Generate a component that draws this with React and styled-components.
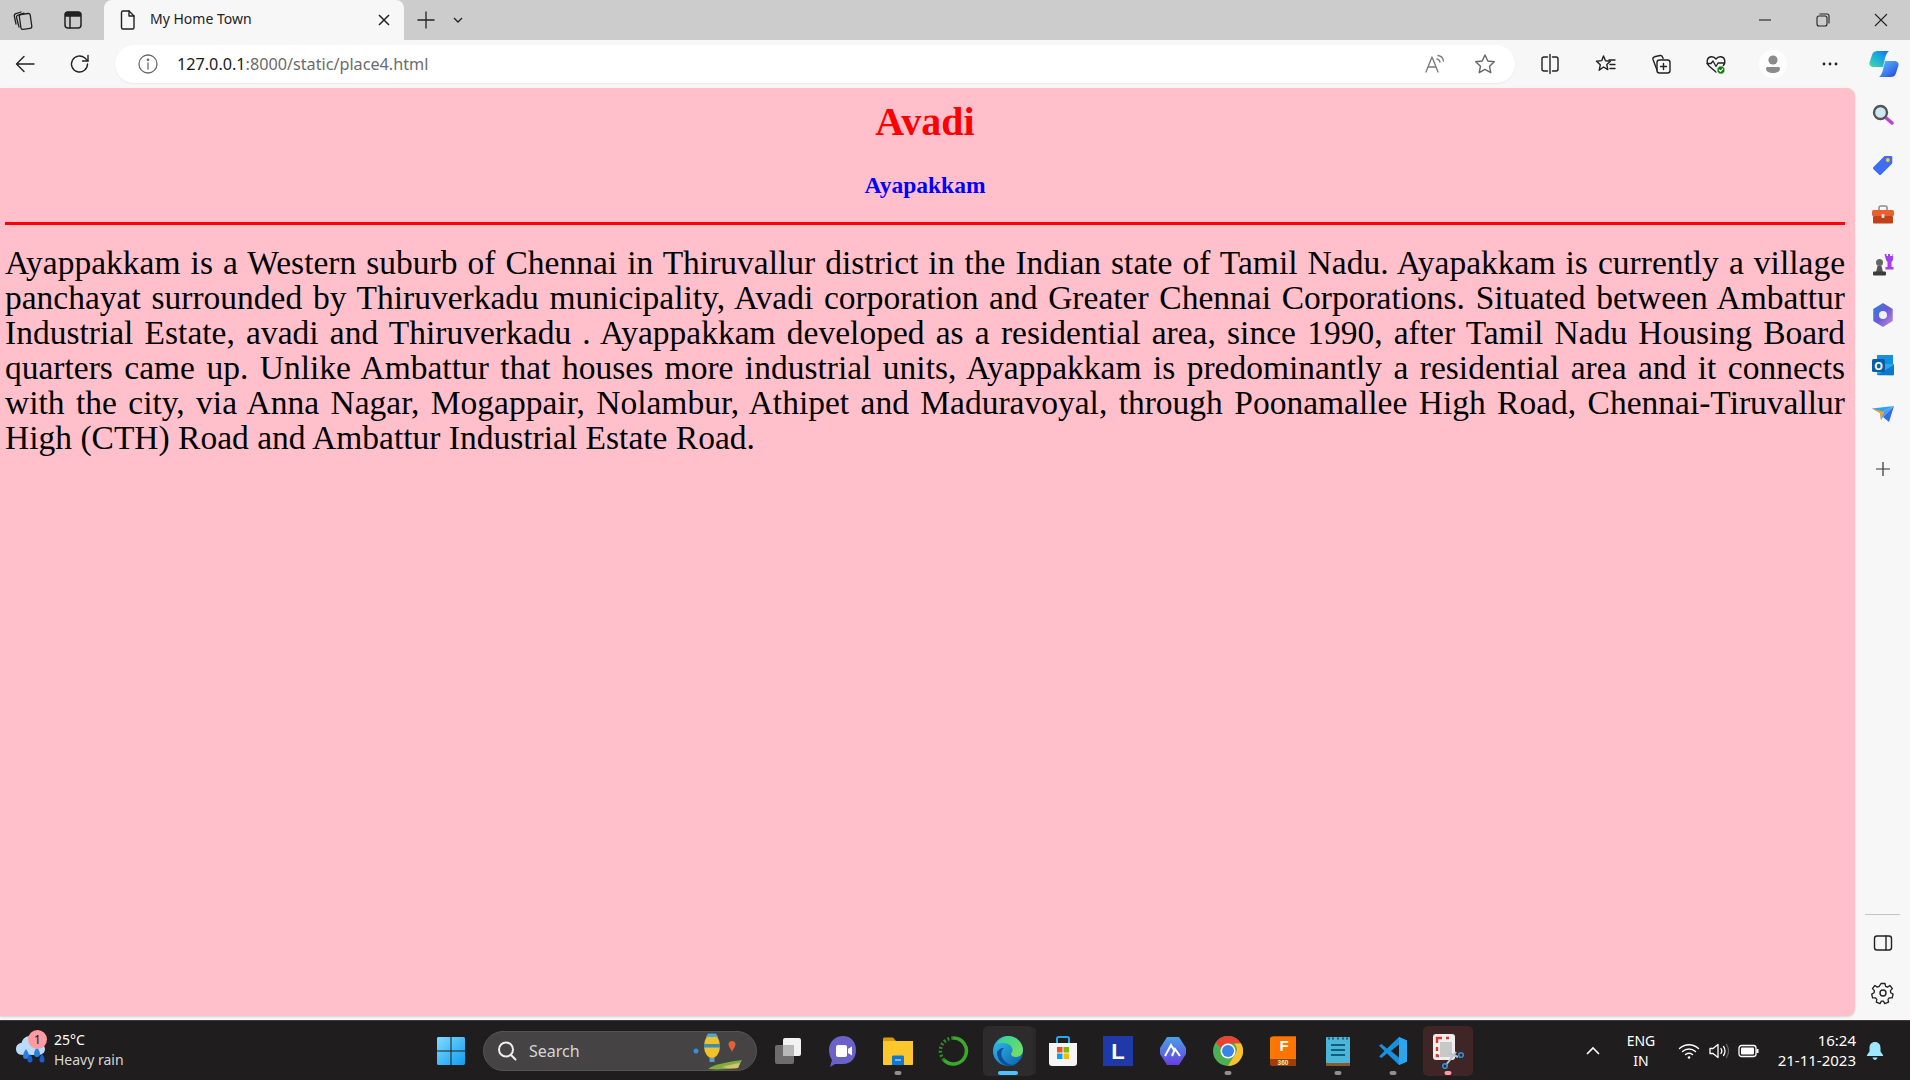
import React from 'react'
import styled, { createGlobalStyle } from 'styled-components'

const GlobalStyle = createGlobalStyle`
  html, body { margin: 0; padding: 0; height: 100%; overflow: hidden; }
  #root { height: 100%; }
`

const Screen = styled.div`
  width: 1910px;
  height: 1080px;
  display: flex;
  flex-direction: column;
  background: #f7f7f7;
  font-family: "Noto Sans", "Open Sans", sans-serif;
`

const TabStrip = styled.div`
  height: 40px;
  background: #cccccc;
  display: flex;
  align-items: stretch;
`

const StripSlot = styled.div`
  width: ${(p) => p.$w || 52}px;
  margin-left: ${(p) => p.$ml || 0}px;
  display: flex;
  align-items: center;
  justify-content: center;
`

const Tab = styled.div`
  width: 300px;
  margin-left: 3px;
  background: #f7f7f7;
  border-radius: 8px 8px 0 0;
  display: flex;
  align-items: center;
  padding: 0 13px 0 12px;
  box-sizing: border-box;
`

const TabTitle = styled.span`
  flex: 1;
  margin-left: 10px;
  font-size: 14px;
  line-height: 18px;
  padding-bottom: 2px;
  color: #222;
`

const WindowControls = styled.div`
  margin-left: auto;
  display: flex;
`

const WinBtn = styled.div`
  width: 58px;
  display: flex;
  align-items: center;
  justify-content: center;
`

const Toolbar = styled.div`
  height: 48px;
  display: flex;
  align-items: center;
  background: #f7f7f7;
`

const ToolSlot = styled.div`
  width: ${(p) => p.$w || 55}px;
  margin-left: ${(p) => p.$ml || 0}px;
  height: 40px;
  flex: none;
  display: flex;
  align-items: center;
  justify-content: center;
`

const AddressBar = styled.div`
  flex: 1;
  height: 38px;
  margin: 0 6px 0 10px;
  background: #ffffff;
  border-radius: 19px;
  box-shadow: 0 1px 2px rgba(0, 0, 0, 0.06);
  display: flex;
  align-items: center;
  padding: 0 5px 0 21px;
`

const Url = styled.span`
  margin-left: 17px;
  font-size: 16.2px;
  color: #1a1a1a;
  flex: 1;
  span { color: #6b6b6b; }
`

const Middle = styled.div`
  height: 932px;
  display: flex;
  align-items: flex-start;
`

const Page = styled.main`
  width: 1855px;
  height: 928px;
  flex: none;
  box-sizing: border-box;
  background: #ffc0cb;
  border-radius: 0 8px 8px 0;
  box-shadow: 0 1px 2px rgba(0, 0, 0, 0.15);
  padding: 11px 10px 0 5px;
  overflow: hidden;
`

const Heading = styled.h1`
  margin: 0;
  text-align: center;
  color: #ff0000;
  font: bold 40px/46px "Liberation Serif", serif;
`

const SubHeading = styled.h3`
  margin: 26px 0 0;
  text-align: center;
  color: #0000ff;
  font: bold 23.5px/28px "Liberation Serif", serif;
`

const Rule = styled.hr`
  margin: 23px 0 0;
  height: 3px;
  border: 0;
  background: #ff0000;
`

const Paragraph = styled.p`
  margin: 20px 0 0;
  color: #000;
  text-align: justify;
  font: 33.5px/35px "Liberation Serif", serif;
`

const SideBar = styled.aside`
  flex: 1;
  height: 930px;
  display: flex;
  flex-direction: column;
  align-items: center;
  padding-top: 2px;
  box-sizing: border-box;
`

const SideIcon = styled.div`
  height: 50px;
  width: 100%;
  flex: none;
  margin-top: ${(p) => p.$mt || 0}px;
  display: flex;
  align-items: center;
  justify-content: center;
`

const SideDivider = styled.div`
  width: 35px;
  height: 1px;
  flex: none;
  margin-top: auto;
  margin-bottom: 3px;
  background: #c4c4c4;
`

const Taskbar = styled.footer`
  height: 60px;
  background: #1f1d1d;
  border-top: 1px solid #3a3a3a;
  box-sizing: border-box;
  display: flex;
  align-items: center;
  color: #fff;
`

const Weather = styled.div`
  width: 423.5px;
  flex: none;
  display: flex;
  align-items: center;
  padding-left: 14px;
  box-sizing: border-box;
`

const WeatherIcon = styled.div`
  position: relative;
  width: 40px;
  height: 40px;
  flex: none;
`

const Badge = styled.span`
  position: absolute;
  left: 14px;
  top: -1px;
  width: 19px;
  height: 19px;
  border-radius: 50%;
  background: #ff9aa2;
  color: #201010;
  font-size: 12px;
  line-height: 19px;
  text-align: center;
`

const WeatherText = styled.div`
  font-size: 14px;
  line-height: 20px;
  padding-bottom: 2px;
  div + div { color: #d8d8d8; }
`

const AppSlot = styled.div`
  position: relative;
  width: ${(p) => (p.$bg ? 50 : 55)}px;
  margin: 0 ${(p) => (p.$bg ? 2.5 : 0)}px;
  height: 50px;
  flex: none;
  display: flex;
  align-items: center;
  justify-content: center;
  border-radius: 5px;
  background: ${(p) => p.$bg || 'transparent'};
  box-shadow: ${(p) => (p.$stacked ? '4px 0 0 -1px #2a2828' : 'none')};
`

const Dot = styled.i`
  position: absolute;
  left: 50%;
  bottom: 1px;
  transform: translateX(-50%);
  width: ${(p) => p.$w || 7}px;
  height: 4px;
  border-radius: 2px;
  background: ${(p) => p.$c || '#8f8f8f'};
`

const SearchBox = styled.div`
  width: 274px;
  height: 40px;
  flex: none;
  margin: 0 3.5px 0 4.5px;
  box-sizing: border-box;
  border-radius: 20px;
  background: #454343;
  border: 1px solid #555;
  display: flex;
  align-items: center;
  padding: 0 4px 0 12px;
  font-size: 16px;
  color: #d6d6d6;
  span { flex: 1; margin-left: 11px; }
`

const Tray = styled.div`
  margin-left: auto;
  display: flex;
  align-items: center;
  padding-right: 16px;
`

const TraySlot = styled.div`
  width: ${(p) => p.$w || 30}px;
  margin-left: ${(p) => p.$ml || 0}px;
  flex: none;
  display: flex;
  align-items: center;
  justify-content: center;
`

const Lang = styled.div`
  width: 50px;
  text-align: center;
  font-size: 14px;
  line-height: 20px;
`

const Clock = styled.div`
  width: 92px;
  text-align: right;
  font-size: 15px;
  line-height: 20px;
  padding-bottom: 2px;
  white-space: nowrap;
`

const S = ({ size = 24, vb = 24, children }) => (
  <svg width={size} height={size} viewBox={`0 0 ${vb} ${vb}`} fill="none" stroke="#222" strokeWidth="1.3" strokeLinecap="round" strokeLinejoin="round">
    {children}
  </svg>
)

const Collections2 = () => (
  <S>
    <rect x="9" y="6" width="11" height="15" rx="2" transform="rotate(-8 14 13)" />
    <path d="M8 19 5.5 9.5c-.3-1.3.4-2 1.5-2.4l6-2" />
    <path d="M5 16 3.4 8.5C3 7 3.8 6 5 5.6L10 4" />
  </S>
)
const TabActions = () => (
  <S>
    <rect x="4" y="4" width="16" height="16" rx="3" strokeWidth="1.5" />
    <path d="M4.500 8h15V5.500l-1.500-1H6l-1.500 1z" fill="#222" />
    <path d="M9 8v12" strokeWidth="1.5" />
  </S>
)
const Doc = () => (
  <S>
    <path d="M7 3h6l5 5v11.500a1.500 1.500 0 0 1-1.500 1.500h-9.500a1.500 1.500 0 0 1-1.500-1.500V4.500A1.500 1.500 0 0 1 7 3z" strokeWidth="1.4" />
    <path d="M13 3v5h5" strokeWidth="1.4" />
  </S>
)
const Info = () => (
  <S>
    <circle cx="12" cy="12" r="9" stroke="#6a6a6a" />
    <path d="M12 11v6" stroke="#6a6a6a" />
    <circle cx="12" cy="7.800" r=".7" fill="#6a6a6a" stroke="#6a6a6a" />
  </S>
)
const ReadAloud = () => (
  <S>
    <path d="M3 20 9 5l6 15M5.300 15h7.400" stroke="#777" />
    <path d="M14 7c1.500.3 2.700 1.500 3 3M15 3.500c3 .4 5 2.500 5.500 5.500" stroke="#777" />
  </S>
)
const Star = () => (
  <S>
    <path d="m12 3 2.800 6 6.500.8-4.800 4.400 1.300 6.500L12 17.400l-5.800 3.300 1.300-6.500L2.700 9.800 9.200 9z" stroke="#666" strokeWidth="1.400" />
  </S>
)
const Split = () => (
  <S>
    <path d="M9.500 5H6a2 2 0 0 0-2 2v10a2 2 0 0 0 2 2h3.500M14.500 5H18a2 2 0 0 1 2 2v10a2 2 0 0 1-2 2h-3.500" strokeWidth="1.400" />
    <path d="M12 2.500v19" strokeWidth="1.400" />
  </S>
)
const Favorites = () => (
  <S>
    <path d="m9.500 4 2 4.800 5 .5-3.700 3.300 1 5-4.300-2.600-4.300 3.300 1.100-5.500-3.800-3.600 5.300-.6z" strokeWidth="1.400" />
    <path d="M15 8h6M16 12.500h5M16 16.500h5" strokeWidth="1.400" />
  </S>
)
const Collections = () => (
  <S>
    <path d="M8 18 4 7.500c-.4-1.400.2-2.300 1.500-2.700L11 3.500c1.200-.2 2 .2 2.500 1.500l.6 1.500" strokeWidth="1.400" />
    <rect x="8" y="8" width="13" height="13" rx="2.500" strokeWidth="1.400" />
    <path d="M14.500 11.500v6M11.500 14.500h6" strokeWidth="1.400" />
  </S>
)
const Health = () => (
  <S>
    <path d="M12 20 5 14C2 11 2.500 5.500 7 4.800c2-.3 3.800.6 5 2.200 1.200-1.600 3-2.500 5-2.200 4.500.7 5 6.200 2 9.200" strokeWidth="1.400" />
    <path d="M3 11.500h4l2-2.500 3 5.500 2-3.500h6" strokeWidth="1.300" />
    <circle cx="17" cy="18" r="4.200" fill="#107c10" stroke="#fff" strokeWidth="1" />
    <path d="m15.200 18 1.300 1.300 2.300-2.500" stroke="#fff" strokeWidth="1.100" />
  </S>
)
const Profile = () => (
  <svg width="28" height="28" viewBox="0 0 28 28">
    <circle cx="14" cy="14" r="14" fill="#fdfdfd" />
    <circle cx="14" cy="10" r="4.600" fill="#8b8b8b" />
    <path d="M7 18.500c0-1 .8-1.500 1.800-1.500h10.400c1 0 1.800.5 1.800 1.500 0 3-3 4.500-7 4.500s-7-1.500-7-4.500z" fill="#8b8b8b" />
  </svg>
)
const Dots = () => (
  <svg width="18" height="4" viewBox="0 0 18 4" fill="#222">
    <circle cx="3" cy="2" r="1.400" /><circle cx="9" cy="2" r="1.400" /><circle cx="15" cy="2" r="1.400" />
  </svg>
)
const Copilot = () => (
  <svg width="30" height="28" viewBox="0 0 30 28">
    <defs>
      <linearGradient id="cp1" x1="0" y1="1" x2="1" y2="0"><stop offset="0" stopColor="#46dca0" /><stop offset=".6" stopColor="#18a4e4" /><stop offset="1" stopColor="#1470d0" /></linearGradient>
      <linearGradient id="cp2" x1="0" y1="0" x2="1" y2="1"><stop offset="0" stopColor="#5cc0f8" /><stop offset=".6" stopColor="#3a78ee" /><stop offset="1" stopColor="#2438c8" /></linearGradient>
    </defs>
    <path d="M8.500 1H20c-2 1.500-3 3.500-3.800 6.500L14 17H5c-3 0-5-1.500-4.500-4.500L3 5C4 2 5.500 1 8.500 1z" fill="url(#cp1)" />
    <path d="M21.500 27H10c2-1.500 3-3.500 3.800-6.500L16 11h9c3 0 5 1.500 4.500 4.500L27 23c-1 3-2.500 4-5.500 4z" fill="url(#cp2)" />
  </svg>
)

const Magnifier = () => (
  <svg width="22" height="22" viewBox="0 0 22 22">
    <path d="m13 13 7 6" stroke="#c23ed8" strokeWidth="3.500" strokeLinecap="round" />
    <circle cx="8.500" cy="8.500" r="6.500" fill="#cfe7f5" stroke="#555" strokeWidth="2.400" />
  </svg>
)
const PriceTag = () => (
  <svg width="22" height="22" viewBox="0 0 22 22">
    <path d="M1.500 13 12 2.500c.5-.5 1-.6 1.600-.6H19c.8 0 1.300.5 1.300 1.300v5.400c0 .6-.2 1.100-.6 1.500L9.200 20.500c-.7.700-1.700.7-2.300 0L1.500 15.200c-.6-.6-.6-1.600 0-2.200z" fill="#3f6df0" />
    <circle cx="15.800" cy="6" r="2" fill="#f7c93a" />
  </svg>
)
const Toolbox = () => (
  <svg width="24" height="22" viewBox="0 0 24 22">
    <path d="M8 6V3.500C8 2.700 8.700 2 9.500 2h5c.8 0 1.500.7 1.500 1.500V6" fill="none" stroke="#8d8d8d" strokeWidth="1.600" />
    <rect x="1" y="6" width="22" height="6" rx="1.500" fill="#e8602c" />
    <rect x="2" y="12" width="20" height="7.500" rx="1" fill="#c2411a" />
    <rect x="10.500" y="10" width="3" height="4" rx=".8" fill="#d8d8d8" />
  </svg>
)
const Chess = () => (
  <svg width="24" height="24" viewBox="0 0 24 24">
    <path d="M15 2h2v2h1.500V2h2v2H23V2h.5v6l-1.500 2v5h2v2.500h-8V15h2v-5l-1.500-2z" fill="#a93bf0" transform="translate(-1.500 -1)" />
    <circle cx="8.500" cy="9.500" r="3.500" fill="#666" />
    <path d="M6.500 13h4l1.500 6H5z" fill="#555" />
    <rect x="2" y="18.500" width="13" height="4" rx="1" fill="#3c3c3c" />
  </svg>
)
const M365 = () => (
  <svg width="22" height="24" viewBox="0 0 22 24">
    <defs>
      <linearGradient id="m1" x1="0" y1="0" x2="1" y2="1"><stop offset="0" stopColor="#2f7fe0" /><stop offset=".5" stopColor="#6a5bd8" /><stop offset="1" stopColor="#c28ad8" /></linearGradient>
    </defs>
    <path d="M11 1 20 6.500v11L11 23 2 17.500v-11z" fill="url(#m1)" stroke="url(#m1)" strokeWidth="1.500" strokeLinejoin="round" />
    <circle cx="11" cy="12" r="4" fill="#f1f1f6" />
  </svg>
)
const Outlook = () => (
  <svg width="24" height="24" viewBox="0 0 24 24">
    <rect x="6" y="2" width="16" height="11" fill="#1490df" />
    <path d="M6 11h17v10.500c0 .5-.4.800-.8.800H7c-.6 0-1-.4-1-.8z" fill="#28a8ea" />
    <path d="m6 22 17-10v9.500c0 .5-.4.800-.8.800z" fill="#0f78c8" />
    <rect x="1" y="6" width="13" height="13" rx="1.500" fill="#0a5ca8" />
    <text x="7.500" y="16.500" textAnchor="middle" fontFamily="Noto Sans, sans-serif" fontWeight="700" fontSize="11" fill="#fff">O</text>
  </svg>
)
const Send = () => (
  <svg width="24" height="20" viewBox="0 0 24 20">
    <path d="M1 3.500 23 1 9 8z" fill="#2fa3f0" />
    <path d="M23 1 18 17l-6-5z" fill="#2f6df0" />
    <path d="m9 8 14-7-11 11 -2 3z" fill="#4a9bf5" />
    <path d="M1 3.500 9 8l1 7 3-8z" fill="#f0a820" />
  </svg>
)
const PanelIcon = () => (
  <S>
    <rect x="3.500" y="5" width="17" height="14" rx="2.500" strokeWidth="1.400" />
    <path d="M15 5v14" strokeWidth="1.400" />
  </S>
)
const Gear = () => (
  <S>
    <circle cx="12" cy="12" r="3" strokeWidth="1.400" />
    <path d="M10 2.500h4l.6 2.800 1.900.8 2.400-1.600 2.500 3.100-2 2 .3 2.200 2.400 1.300-.9 3.800-2.800-.1-1.400 1.600.5 2.800-3.700 1.400-1.400-2.400h-2l-1.400 2.400-3.700-1.400.5-2.800-1.400-1.600-2.800.1-.9-3.800 2.400-1.300.3-2.200-2-2 2.500-3.100 2.400 1.600 1.900-.8z" strokeWidth="1.300" />
  </S>
)

const RainCloud = () => (
  <svg width="36" height="36" viewBox="0 0 36 36">
    <path d="M9 24c-5 0-7-3-7-6 0-3.500 2.500-6 5.500-6 1-4 4-7 8.500-7s8 3 8.500 7.500c4 0 6.500 2.500 6.500 5.500 0 3.500-3 6-6.500 6z" fill="#b9dcfb" />
    <path d="M12 18c2 3 3 5 3 7a3 3 0 0 1-6 0c0-2 1-4 3-7zM23 16c2 3 3 5 3 7a3 3 0 0 1-6 0c0-2 1-4 3-7z" fill="#2b7fe0" />
    <path d="M16 23c1.500 2 2.500 4 2.500 6a2.500 2.500 0 0 1-5 0c0-2 1-4 2.500-6zM28 23c1.500 2 2.500 4 2.500 6a2.500 2.500 0 0 1-5 0c0-2 1-4 2.500-6z" fill="#1a5fc8" />
  </svg>
)
const WindowsLogo = () => (
  <svg width="30" height="30" viewBox="0 0 30 30">
    <defs>
      <linearGradient id="w1" x1="0" y1="0" x2="1" y2="1"><stop offset="0" stopColor="#7fdcff" /><stop offset="1" stopColor="#0f9bf0" /></linearGradient>
    </defs>
    <path d="M1 2.500C1 1.700 1.700 1 2.500 1H14.500v13.500H1zM15.500 1h12C28.300 1 29 1.700 29 2.500v12H15.500zM1 15.500h13.500V29H2.500C1.700 29 1 28.300 1 27.500zM15.500 15.500H29v12c0 .8-.7 1.500-1.500 1.500h-12z" fill="url(#w1)" />
  </svg>
)
const SearchGlass = () => (
  <svg width="22" height="22" viewBox="0 0 22 22" fill="none" stroke="#eee" strokeWidth="2" strokeLinecap="round">
    <circle cx="10" cy="9.500" r="7" />
    <path d="m15 15 4.500 4.500" />
  </svg>
)
const Balloon = () => (
  <svg width="60" height="40" viewBox="0 0 60 40">
    <ellipse cx="20" cy="15" rx="8" ry="12" fill="#f0c02f" />
    <path d="M12 13h16v3.500H12z" fill="#3a8fb0" />
    <path d="M14 6h12l-2-3.500h-8z" fill="#4aa8c8" />
    <rect x="17.500" y="27" width="5" height="4" fill="#5b9bd0" />
    <circle cx="4" cy="20" r="2.500" fill="#3a8fd8" />
    <path d="M40 10c2.500 0 3.500 1.500 3.500 3.500S41 18 40 21c-1-3-3.500-5.500-3.500-7.500S37.500 10 40 10z" fill="#e0603a" />
    <path d="M16 38c6-5 20-7 34-9l-4 8c-8 1-20 2-30 1z" fill="#7fae3e" />
    <path d="M30 36c6-2 12-3 18-4l-2 5c-5 .5-11 .5-16-1z" fill="#d8c070" />
  </svg>
)
const TaskView = () => (
  <svg width="32" height="32" viewBox="0 0 32 32">
    <rect x="3" y="10" width="19" height="19" rx="2" fill="#6d6d6d" />
    <rect x="11" y="3" width="18" height="18" rx="2" fill="#f2f2f2" />
    <rect x="11" y="10" width="11" height="11" fill="#b8b8b8" />
  </svg>
)
const Meet = () => (
  <svg width="32" height="34" viewBox="0 0 32 34">
    <path d="M16 2c8 0 13 6 13 14s-5 14-13 14H8l-5 3 2-7c-2-3-3-6-3-10C2 8 8 2 16 2z" fill="#6a62c8" />
    <rect x="9" y="11" width="11" height="12" rx="2" fill="#fff" />
    <path d="m21 15 4-2.500v9L21 19z" fill="#fff" />
  </svg>
)
const Folder = () => (
  <svg width="32" height="32" viewBox="0 0 32 32">
    <path d="M1 4c0-1 .7-1.500 1.500-1.500H11l3 3.500H1z" fill="#d99a0a" />
    <path d="M1 6h30v23c0 .6-.4 1-1 1H2c-.6 0-1-.4-1-1z" fill="#fcc72c" />
    <path d="M10 22c0-1 .7-1.500 1.500-1.500h9c.8 0 1.500.5 1.500 1.500v8H10z" fill="#0f78d4" />
    <path d="M13 25h6" stroke="#bfe0fa" strokeWidth="1.200" />
  </svg>
)
const GreenRing = () => (
  <svg width="32" height="32" viewBox="0 0 32 32" fill="none">
    <path d="M16 3a13 13 0 1 1-9 22" stroke="#3aaa2a" strokeWidth="3.500" />
    <path d="M7 25A13 13 0 0 1 16 3" stroke="#2f8a2a" strokeWidth="3.500" strokeDasharray="2 2" />
  </svg>
)
const Edge = () => (
  <svg width="32" height="32" viewBox="0 0 32 32">
    <defs>
      <linearGradient id="e1" x1="0" y1="0" x2="1" y2="1"><stop offset="0" stopColor="#35c1f1" /><stop offset="1" stopColor="#0a5fa8" /></linearGradient>
      <linearGradient id="e2" x1="0" y1="0" x2="1" y2="1"><stop offset="0" stopColor="#2fcfa0" /><stop offset="1" stopColor="#7fe05a" /></linearGradient>
    </defs>
    <circle cx="16" cy="16" r="15" fill="url(#e1)" />
    <path d="M5 9C8 3 13 1 16 1c8 0 15 6 15 14 0 4-3 7-7 7-3 0-5-1.500-5-3 0-1 1.500-1.500 1.500-4C20.500 11 16 8 12 8c-3 0-5 .3-7 1z" fill="url(#e2)" />
    <path d="M12 13c-3 2-3.500 7-1 11 2 3 6 6 11 6 1 0 2-.2 3-.6-2 1-5 1.600-7 1.600-6 0-13-5-13-14 3-4 5-4 7-4z" fill="#0c4f96" />
  </svg>
)
const Store = () => (
  <svg width="30" height="32" viewBox="0 0 30 32">
    <path d="M9 8V3.500C9 2.700 9.700 2 10.500 2h9c.8 0 1.500.7 1.500 1.500V8" fill="none" stroke="#28a8ea" strokeWidth="2" />
    <path d="M1 8h28v20c0 1.700-1.300 3-3 3H4c-1.700 0-3-1.300-3-3z" fill="#f5f5f5" />
    <rect x="9" y="12" width="5.500" height="5.500" fill="#f25022" />
    <rect x="15.500" y="12" width="5.500" height="5.500" fill="#7fba00" />
    <rect x="9" y="18.500" width="5.500" height="5.500" fill="#00a4ef" />
    <rect x="15.500" y="18.500" width="5.500" height="5.500" fill="#ffb900" />
  </svg>
)
const LApp = () => (
  <svg width="30" height="30" viewBox="0 0 30 30">
    <rect width="30" height="30" fill="#1f3aa8" />
    <text x="15" y="23" textAnchor="middle" fontFamily="Liberation Sans, sans-serif" fontWeight="700" fontSize="22" fill="#fff">L</text>
  </svg>
)
const ArrowHex = () => (
  <svg width="30" height="32" viewBox="0 0 30 32">
    <defs>
      <linearGradient id="h1" x1="0" y1="0" x2="0" y2="1"><stop offset="0" stopColor="#4aa0e8" /><stop offset="1" stopColor="#6a3fe0" /></linearGradient>
    </defs>
    <path d="M9 2h12l7 11v6l-7 11H9L2 19v-6z" fill="url(#h1)" />
    <path d="m7 21 6-11 3 5M14 21l3-7 5 7" fill="none" stroke="#fff" strokeWidth="2" />
  </svg>
)
const Chrome = () => (
  <svg width="30" height="30" viewBox="0 0 30 30">
    <circle cx="15" cy="15" r="15" fill="#4caf50" />
    <path d="M15 0a15 15 0 0 1 13 7.500H15a7.500 7.500 0 0 0-7 4.800L2.800 6.300A15 15 0 0 1 15 0z" fill="#ea4335" />
    <path d="M28 7.500A15 15 0 0 1 15 30l6.500-11a7.500 7.500 0 0 0-.5-11.500z" fill="#fbc02d" />
    <circle cx="15" cy="15" r="7.500" fill="#fff" />
    <circle cx="15" cy="15" r="6" fill="#3b82e8" />
  </svg>
)
const Fusion = () => (
  <svg width="30" height="32" viewBox="0 0 30 32">
    <path d="M2 4c0-1.500 1-2.500 2.500-2.500H28V25H4c-1 0-2 .6-2 2z" fill="#f47a0a" />
    <path d="M5 1.500h23V22H5z" fill="#ff7300" />
    <path d="M2 24h26v7H4c-1 0-2-1-2-2z" fill="#9c3f08" />
    <text x="16" y="16" textAnchor="middle" fontFamily="Liberation Sans, sans-serif" fontWeight="700" fontSize="15" fill="#fff">F</text>
    <text x="15" y="30" textAnchor="middle" fontFamily="Liberation Sans, sans-serif" fontWeight="700" fontSize="6.500" fill="#eed">360</text>
  </svg>
)
const Notepad = () => (
  <svg width="26" height="32" viewBox="0 0 26 32">
    <rect x="1" y="2" width="24" height="27" rx="1" fill="#4cb6d8" />
    <rect x="1" y="28" width="24" height="3" fill="#8a5a2a" />
    <path d="M4 2.500v2M8 2.500v2M13 2.500v2M18 2.500v2M22 2.500v2" stroke="#1f5f80" strokeWidth="2" />
    <path d="M6 10h14M6 15h14M6 20h14" stroke="#105f80" strokeWidth="2" />
  </svg>
)
const VSCode = () => (
  <svg width="30" height="30" viewBox="0 0 30 30">
    <path d="M21 1 29 4.500v21L21 29 9 17.500 3.500 22 1 20.500 6.500 15 1 9.500 3.500 8 9 12.500z" fill="#1a8fdc" />
    <path d="M21 8.500 13 15l8 6.500z" fill="#1f1d1d" />
    <path d="M21 1 29 4.500v21L21 29z" fill="#2aa5ee" />
  </svg>
)
const Snip = () => (
  <svg width="32" height="36" viewBox="0 0 32 36">
    <rect x="1" y="1" width="22" height="26" rx="3" fill="#eeeeee" />
    <path d="M5 10V5h5M14 5h3" stroke="#d83b2e" strokeWidth="2.400" fill="none" />
    <path d="M5 14v4M5 21v2h2" stroke="#d83b2e" strokeWidth="2.400" fill="none" />
    <rect x="8" y="9" width="12" height="15" fill="#c8c8c8" />
    <path d="M14 32 24 19M17 20l9 4" stroke="#b8c4cc" strokeWidth="2" />
    <circle cx="13" cy="33" r="2.300" fill="none" stroke="#2c8fdc" strokeWidth="1.600" />
    <circle cx="29" cy="22" r="2.300" fill="none" stroke="#2c8fdc" strokeWidth="1.600" />
  </svg>
)

const sideIcons = [Magnifier, PriceTag, Toolbox, Chess, M365, Outlook, Send]

const apps = [
  { Icon: TaskView },
  { Icon: Meet },
  { Icon: Folder, dot: true },
  { Icon: GreenRing },
  { Icon: Edge, dot: true, dotColor: '#4cc2ff', dotWidth: 20, bg: '#2d2b2b', stacked: true },
  { Icon: Store },
  { Icon: LApp },
  { Icon: ArrowHex },
  { Icon: Chrome, dot: true },
  { Icon: Fusion },
  { Icon: Notepad, dot: true },
  { Icon: VSCode, dot: true },
  { Icon: Snip, dot: true, dotColor: '#ff9aa2', bg: '#402527' },
]

export default function App() {
  return (
    <Screen>
      <GlobalStyle />
      <TabStrip>
        <StripSlot $w={45}><Collections2 /></StripSlot>
        <StripSlot $w={56}><TabActions /></StripSlot>
        <Tab>
          <Doc />
          <TabTitle>My Home Town</TabTitle>
          <svg width="14" height="14" viewBox="0 0 14 14" stroke="#222" strokeWidth="1.500"><path d="m2 2 10 10M12 2 2 12" /></svg>
        </Tab>
        <StripSlot $w={44}>
          <svg width="20" height="20" viewBox="0 0 20 20" stroke="#222" strokeWidth="1.300"><path d="M10 1.500v17M1.500 10h17" /></svg>
        </StripSlot>
        <StripSlot $w={20}>
          <svg width="12" height="12" viewBox="0 0 12 12" fill="none" stroke="#222" strokeWidth="1.300"><path d="m2 4 4 4 4-4" /></svg>
        </StripSlot>
        <WindowControls>
          <WinBtn><svg width="14" height="14" viewBox="0 0 14 14" stroke="#222" strokeWidth="1.100"><path d="M1 7h12" /></svg></WinBtn>
          <WinBtn><svg width="14" height="14" viewBox="0 0 14 14" fill="none" stroke="#222" strokeWidth="1.100"><rect x="1" y="3" width="10" height="10" rx="2" /><path d="M3.500 1H11a2 2 0 0 1 2 2v7.500" /></svg></WinBtn>
          <WinBtn><svg width="14" height="14" viewBox="0 0 14 14" stroke="#222" strokeWidth="1.100"><path d="m1 1 12 12M13 1 1 13" /></svg></WinBtn>
        </WindowControls>
      </TabStrip>
      <Toolbar>
        <ToolSlot $w={50}><S><path d="M21 12H3.500M11 4.500 3.500 12l7.500 7.500" strokeWidth="1.400" /></S></ToolSlot>
        <ToolSlot $w={50} $ml={5}><S><path d="M19.500 12a8 8 0 1 1-2.600-5.900L20 9" strokeWidth="1.400" /><path d="M20 3.500V9h-5.500" strokeWidth="1.400" /></S></ToolSlot>
        <AddressBar>
          <Info />
          <Url>127.0.0.1<span>:8000/static/place4.html</span></Url>
          <ToolSlot $w={50}><ReadAloud /></ToolSlot>
          <ToolSlot $w={50}><Star /></ToolSlot>
        </AddressBar>
        <ToolSlot $w={57}><Split /></ToolSlot>
        <ToolSlot $w={55}><Favorites /></ToolSlot>
        <ToolSlot $w={55}><Collections /></ToolSlot>
        <ToolSlot $w={56}><Health /></ToolSlot>
        <ToolSlot $w={58}><Profile /></ToolSlot>
        <ToolSlot $w={56}><Dots /></ToolSlot>
        <ToolSlot $w={52}><Copilot /></ToolSlot>
      </Toolbar>
      <Middle>
        <Page>
          <Heading>Avadi</Heading>
          <SubHeading>Ayapakkam</SubHeading>
          <Rule />
          <Paragraph>
            Ayappakkam is a Western suburb of Chennai in Thiruvallur district in the Indian state of Tamil Nadu. Ayapakkam is currently a village panchayat surrounded by Thiruverkadu municipality, Avadi corporation and Greater Chennai Corporations. Situated between Ambattur Industrial Estate, avadi and Thiruverkadu . Ayappakkam developed as a residential area, since 1990, after Tamil Nadu Housing Board quarters came up. Unlike Ambattur that houses more industrial units, Ayappakkam is predominantly a residential area and it connects with the city, via Anna Nagar, Mogappair, Nolambur, Athipet and Maduravoyal, through Poonamallee High Road, Chennai-Tiruvallur High (CTH) Road and Ambattur Industrial Estate Road.
          </Paragraph>
        </Page>
        <SideBar>
          {sideIcons.map((Icon, i) => (
            <SideIcon key={i}><Icon /></SideIcon>
          ))}
          <SideIcon $mt={4}><svg width="18" height="18" viewBox="0 0 18 18" stroke="#333" strokeWidth="1.200"><path d="M9 2v14M2 9h14" /></svg></SideIcon>
          <SideDivider />
          <SideIcon><PanelIcon /></SideIcon>
          <SideIcon><Gear /></SideIcon>
        </SideBar>
      </Middle>
      <Taskbar>
        <Weather>
          <WeatherIcon>
            <RainCloud />
            <Badge>1</Badge>
          </WeatherIcon>
          <WeatherText>
            <div>25°C</div>
            <div>Heavy rain</div>
          </WeatherText>
        </Weather>
        <AppSlot><WindowsLogo /></AppSlot>
        <SearchBox>
          <SearchGlass />
          <span>Search</span>
          <Balloon />
        </SearchBox>
        {apps.map(({ Icon, dot, dotColor, dotWidth, bg, stacked }, i) => (
          <AppSlot key={i} $bg={bg} $stacked={stacked}>
            <Icon />
            {dot && <Dot $c={dotColor} $w={dotWidth} />}
          </AppSlot>
        ))}
        <Tray>
          <TraySlot $w={46}>
            <svg width="16" height="10" viewBox="0 0 16 10" fill="none" stroke="#fff" strokeWidth="1.600"><path d="m2 8 6-6 6 6" /></svg>
          </TraySlot>
          <Lang>ENG<br />IN</Lang>
          <TraySlot $ml={8}>
            <svg width="22" height="18" viewBox="0 0 22 18" fill="none" stroke="#fff" strokeWidth="1.400" strokeLinecap="round"><path d="M1.500 6.500c5.500-5 13.500-5 19 0M4.500 9.500c3.800-3.300 9.200-3.300 13 0M7.500 12.500c2-1.500 5-1.500 7 0" /><circle cx="11" cy="15.500" r="1.300" fill="#fff" stroke="none" /></svg>
          </TraySlot>
          <TraySlot>
            <svg width="22" height="18" viewBox="0 0 22 18" fill="none" stroke="#fff" strokeWidth="1.300" strokeLinecap="round" strokeLinejoin="round"><path d="M2 6.500h3L10 2.500v13l-5-4H2z" /><path d="M13 6.500c1 1.500 1 3.500 0 5M15.500 4.500c2 2.500 2 6.500 0 9" /><path d="M18.500 2.500c2.500 4 2.500 9 0 13" stroke="#666" /></svg>
          </TraySlot>
          <TraySlot>
            <svg width="22" height="14" viewBox="0 0 22 14" fill="none"><rect x="1" y="1.500" width="17" height="11" rx="2.500" stroke="#fff" strokeWidth="1.300" /><rect x="3" y="3.500" width="13" height="7" rx="1" fill="#fff" /><path d="M19.500 5v4" stroke="#fff" strokeWidth="2" /></svg>
          </TraySlot>
          <Clock>16:24<br />21-11-2023</Clock>
          <TraySlot $w={38}>
            <svg width="18" height="20" viewBox="0 0 18 20" fill="#9fe6ff"><path d="M9 1c3.500 0 5.500 2.500 5.500 6v3.500L17 14c.3.500 0 1-.6 1H1.600c-.6 0-.9-.5-.6-1l2.500-3.500V7C3.500 3.500 5.500 1 9 1z" /><path d="M6.500 16.500h5C11 18 10 19 9 19s-2-1-2.500-2.500z" /></svg>
          </TraySlot>
        </Tray>
      </Taskbar>
    </Screen>
  )
}
